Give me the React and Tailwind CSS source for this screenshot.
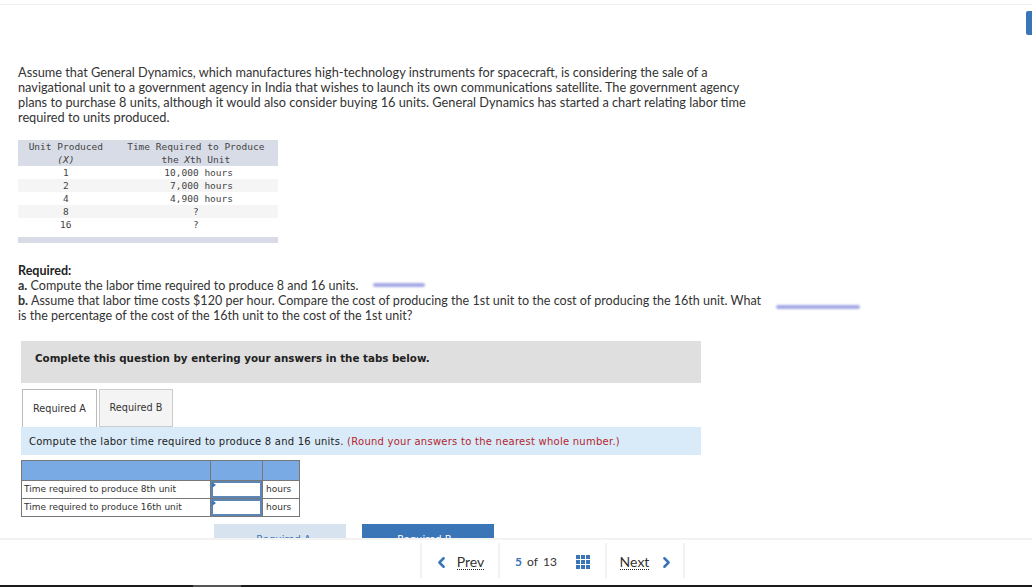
import { ChevronLeft, ChevronRight } from "lucide-react";

const BODY = "font-['Lato','Open_Sans',sans-serif]";
const MONO = "font-['DejaVu_Sans_Mono',monospace]";
const VERD = "font-['DejaVu_Sans',sans-serif]";

const ROWS = [
    ["1", "10,000 hours", false],
    ["2", "7,000 hours", true],
    ["4", "4,900 hours", false],
    ["8", "?", true],
    ["16", "?", false],
];

function Smudge({ className }) {
    return <span className={"inline-block h-[4px] rounded-sm bg-[#a4a8e4] blur-[1px] " + className} />;
}

function ChartTable() {
    return (
        <div className={"mt-[15px] w-[260px] text-[9.5px] leading-[13px] text-[#444] " + MONO}>
            <div className="flex bg-[#d8dce6]">
                <div className="w-[96px] text-center">Unit Produced<br /><i>(X)</i></div>
                <div className="w-[165px] text-center">Time Required to Produce<br />the <i>X</i>th Unit</div>
            </div>
            {ROWS.map(([unit, time, shaded]) => (
                <div key={unit} className={"flex " + (shaded ? "bg-[#f5f5f5]" : "bg-white")}>
                    <div className="w-[96px] text-center">{unit}</div>
                    {time === "?" ? (
                        <div className="w-[165px] text-center">{time}</div>
                    ) : (
                        <div className="w-[165px] pr-[45px] text-right">{time}</div>
                    )}
                </div>
            ))}
            <div className="mt-[6px] h-[6px] bg-[#d8dce6]" />
        </div>
    );
}

function AnswerRow({ label }) {
    return (
        <div className="flex h-[18px] border-t border-[#777]">
            <div className="flex w-[189px] items-center border-r border-[#777] pl-[2px]">{label}</div>
            <div className="relative w-[52px] border-r border-[#777] bg-white">
                <div className="h-full border-2 border-[#5b86b8]" />
                <span className="absolute left-[1px] top-[1px] border-y-[3px] border-l-[4px] border-y-transparent border-l-[#3a75b8]" />
            </div>
            <div className="flex flex-1 items-center pl-[3px]">hours</div>
        </div>
    );
}

function Pager() {
    return (
        <footer className={"flex h-[47px] shrink-0 justify-center border-t-2 border-[#f2f2f2] pl-[73px] pt-[3px] text-[14px] text-[#333] " + BODY}>
            <div className="flex h-[35px] items-center border-x-2 border-[#f2f2f2]">
                <div className="flex w-[76px] items-center justify-center gap-[7px] pr-[3px] pt-[3px]">
                    <ChevronLeft size={17} strokeWidth={3.5} className="text-[#3a75b8]" />
                    <span className="border-b border-dotted border-[#222] leading-[15px]">Prev</span>
                </div>
                <div className="flex h-full w-[109px] items-center justify-center gap-[5px] border-x-2 border-[#f2f2f2] pt-[3px] text-[12px]">
                    <b className="text-[#3a75b8]">5</b>
                    <span>of</span>
                    <span>13</span>
                    <div className="ml-[14px] grid grid-cols-3 gap-[1px]">
                        {Array.from({ length: 9 }).map((_, i) => (
                            <span key={i} className="h-[4px] w-[4px] bg-[#3a75b8]" />
                        ))}
                    </div>
                </div>
                <div className="flex w-[76px] items-center justify-center gap-[9px] pl-[5px] pt-[3px]">
                    <span className="border-b border-dotted border-[#222] leading-[15px]">Next</span>
                    <ChevronRight size={17} strokeWidth={3.5} className="text-[#3a75b8]" />
                </div>
            </div>
        </footer>
    );
}

export default function App() {
    return (
        <div className="relative flex h-[587px] w-[1032px] flex-col overflow-hidden bg-white">
            <div className="h-[5px] shrink-0 border-b border-[#f0f0f0]" />
            <div className="absolute right-0 top-[11px] h-[24px] w-[6px] rounded-l-[2px] bg-[#3a75b8]" />

            <main className="min-h-0 flex-1 overflow-hidden pl-[18px] pt-[60px]">
                <p className={"whitespace-nowrap text-[12.75px] leading-[15px] text-[#333] " + BODY}>
                    Assume that General Dynamics, which manufactures high-technology instruments for spacecraft, is considering the sale of a<br />
                    navigational unit to a government agency in India that wishes to launch its own communications satellite. The government agency<br />
                    plans to purchase 8 units, although it would also consider buying 16 units. General Dynamics has started a chart relating labor time<br />
                    required to units produced.
                </p>

                <ChartTable />

                <div className={"mt-[20px] whitespace-nowrap text-[12.55px] leading-[15px] text-[#333] " + BODY}>
                    <b className="text-[#222]">Required:</b>
                    <br />
                    <b>a.</b> Compute the labor time required to produce 8 and 16 units.
                    <Smudge className="mb-[3px] ml-[15px] w-[52px]" />
                    <br />
                    <b>b.</b> Assume that labor time costs $120 per hour. Compare the cost of producing the 1st unit to the cost of producing the 16th unit. What
                    <Smudge className="absolute left-[776px] top-[305px] w-[84px]" />
                    <br />
                    is the percentage of the cost of the 16th unit to the cost of the 1st unit?
                </div>

                <div className="ml-[3px] mt-[18px] w-[680px]">
                    <div className={"flex h-[42px] items-center bg-[#dfdfdf] pb-[7px] pl-[14px] text-[10.3px] font-bold text-[#222] " + VERD}>
                        Complete this question by entering your answers in the tabs below.
                    </div>

                    <div className={"mt-[6px] flex h-[38px] gap-[2px] pl-[1px] text-[9.7px] text-[#333] " + VERD}>
                        <div className="z-10 flex h-[38px] w-[75px] items-center justify-center border border-b-0 border-[#bbb] bg-white pt-[1px]">Required A</div>
                        <div className="flex h-[38px] w-[74px] items-center justify-center border border-[#ccc] bg-[#f4f4f4] pt-[1px]">Required B</div>
                    </div>

                    <div className={"flex h-[28px] items-center whitespace-nowrap bg-[#d9ebf9] pl-[8px] text-[10px] tracking-[0.25px] text-[#222] " + VERD}>
                        Compute the labor time required to produce 8 and 16 units.&nbsp;
                        <span className="text-[#b3262d]">(Round your answers to the nearest whole number.)</span>
                    </div>

                    <div className={"mt-[5px] w-[279px] border border-t-0 border-[#777] text-[9px] text-[#333] " + VERD}>
                        <div className="flex h-[20px] border-t border-[#777] bg-[#7aaae3]">
                            <div className="w-[189px] border-r border-[#777]" />
                            <div className="w-[52px] border-r border-[#777]" />
                        </div>
                        <AnswerRow label="Time required to produce 8th unit" />
                        <AnswerRow label="Time required to produce 16th unit" />
                    </div>

                    <div className={"ml-[193px] mt-[7px] flex gap-[16px] text-[10px] " + VERD}>
                        <div className="flex h-[30px] w-[132px] items-center justify-center bg-[#d8e3f0] text-[#3a75b8]">‹ Required A</div>
                        <div className="flex h-[30px] w-[132px] items-center justify-center bg-[#3a75b8] text-white">Required B ›</div>
                    </div>
                </div>
            </main>

            <Pager />
            <div className="flex h-[2px] shrink-0 bg-[#1a1a1a]">
                <div className="ml-[193px] w-[48px] bg-[#555]" />
            </div>
        </div>
    );
}
